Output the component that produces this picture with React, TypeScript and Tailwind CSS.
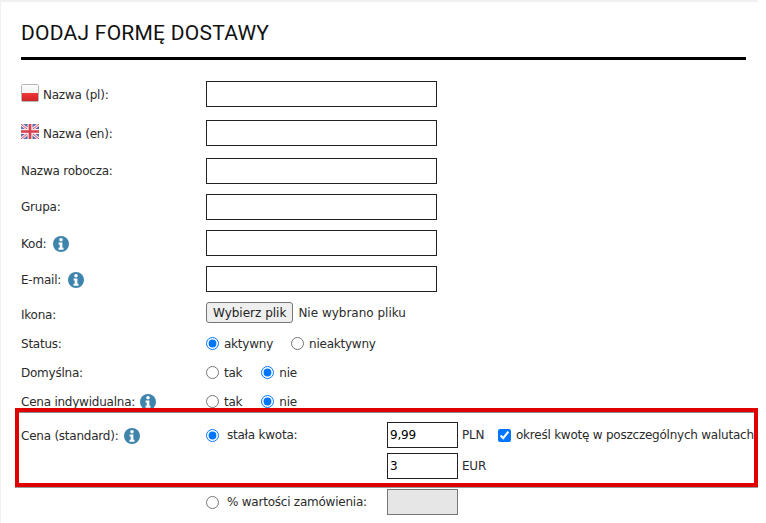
import React from 'react';

function InfoIcon({ className = '' }: { className?: string }) {
  return (
    <svg width="16" height="16" viewBox="0 0 16 16" className={`shrink-0 ${className}`}>
      <circle cx="8" cy="8" r="8" fill="#3e84ad" />
      <circle cx="8" cy="3.8" r="1.8" fill="#ffffff" />
      <path d="M5.6 6.6h3.8v5.2h1.1v1.9H5.5v-1.9h1.2V8.5H5.6z" fill="#ffffff" />
    </svg>
  );
}

function FlagPl() {
  return (
    <svg width="18" height="18" viewBox="0 0 18 18" className="mb-[5px] shrink-0">
      <defs>
        <linearGradient id="plTop" x1="0" y1="0" x2="0" y2="1">
          <stop offset="0" stopColor="#fdfdfd" />
          <stop offset="1" stopColor="#e6e6e6" />
        </linearGradient>
        <linearGradient id="plBottom" x1="0" y1="0" x2="0" y2="1">
          <stop offset="0" stopColor="#ee3a3a" />
          <stop offset="0.55" stopColor="#e0292b" />
          <stop offset="1" stopColor="#c92b2d" />
        </linearGradient>
      </defs>
      <rect x="0.5" y="0.5" width="17" height="17" rx="1" fill="url(#plTop)" stroke="#b5b5b5" />
      <rect x="1" y="9" width="16" height="8" fill="url(#plBottom)" />
    </svg>
  );
}

function FlagEn() {
  return (
    <svg width="18" height="15" viewBox="0 0 18 15" className="mb-[5px] shrink-0">
      <rect width="18" height="15" fill="#5a6cab" />
      <path d="M0 0L18 15M18 0L0 15" stroke="#f3dfe4" strokeWidth="3" />
      <path d="M0 0L18 15M18 0L0 15" stroke="#d9596a" strokeWidth="1" />
      <path d="M9 0V15M0 7.5H18" stroke="#f5e6ea" strokeWidth="5" />
      <path d="M9 0V15M0 7.5H18" stroke="#d8404f" strokeWidth="2.6" />
    </svg>
  );
}

function RadioOption({ checked, label }: { checked?: boolean; label: string }) {
  return (
    <label className="flex items-center gap-[5px]">
      <input type="radio" readOnly checked={!!checked} className="h-[13px] w-[13px]" />
      <span className="pt-[2px]">{label}</span>
    </label>
  );
}

function TextBox({ value = '', className = 'w-[231px]' }: { value?: string; className?: string }) {
  return (
    <input
      readOnly
      value={value}
      className={`h-[26px] border border-[#222222] bg-white px-[2px] text-black outline-none ${className}`}
    />
  );
}

function Row({ label, h, tall, children }: { label?: React.ReactNode; h: string; tall?: boolean; children: React.ReactNode }) {
  return (
    <div className={`flex items-start ${h}`}>
      <div className={`flex w-[185px] shrink-0 items-center gap-[6px] ${tall ? 'h-[28px]' : 'h-[26px]'}`}>{label}</div>
      {children}
    </div>
  );
}

export default function App() {
  return (
    <div className="relative h-[523px] w-[766px] overflow-hidden bg-white">
      <div className="absolute left-0 top-0 h-[2px] w-[758px] bg-[#f0f0f0]" />
      <div className="absolute left-0 top-0 h-full w-[1px] bg-[#f0f0f0]" />

      <div className="pl-[21px] pr-[8px] pt-[21px] font-['DejaVu_Sans',sans-serif] text-[12px] tracking-[-0.23px] text-[#2b2b2b]">
        <h1 className="h-[32px] font-['Roboto',sans-serif] text-[21px] font-normal leading-[25px] tracking-[0.25px] text-[#111111]">
          DODAJ FORMĘ DOSTAWY
        </h1>
        <div className="mt-[4px] mb-[21px] h-[3px] w-[725px] bg-black" />

        <Row h="h-[39px]" tall label={<span className="flex items-center gap-[4px]"><FlagPl />Nazwa (pl):</span>}>
          <TextBox />
        </Row>
        <Row h="h-[38px]" tall label={<span className="flex items-center gap-[4px]"><FlagEn />Nazwa (en):</span>}>
          <TextBox />
        </Row>
        <Row h="h-[36px]" label="Nazwa robocza:"><TextBox /></Row>
        <Row h="h-[36px]" label="Grupa:"><TextBox /></Row>
        <Row h="h-[36px]" tall label={<>Kod: <InfoIcon className="ml-px" /></>}><TextBox /></Row>
        <Row h="h-[36px]" tall label={<>E-mail: <InfoIcon className="ml-px" /></>}><TextBox /></Row>
        <Row h="h-[29px]" label="Ikona:">
          <div className="flex items-center tracking-normal">
            <button className="h-[21px] rounded-[3px] border border-[#767676] bg-[#efefef] px-[6px] text-[#222222]">Wybierz plik</button>
            <span className="ml-[5px]">Nie wybrano pliku</span>
          </div>
        </Row>
        <Row h="h-[29px]" label="Status:">
          <div className="flex h-[24px] gap-[18px]"><RadioOption checked label="aktywny" /><RadioOption label="nieaktywny" /></div>
        </Row>
        <Row h="h-[29px]" label="Domyślna:">
          <div className="flex h-[24px] gap-[19px]"><RadioOption label="tak" /><RadioOption checked label="nie" /></div>
        </Row>
        <Row h="h-[33px]" label={<>Cena indywidualna: <InfoIcon className="-ml-px" /></>}>
          <div className="flex h-[24px] gap-[19px]"><RadioOption label="tak" /><RadioOption checked label="nie" /></div>
        </Row>

        <div className="flex">
          <div className="flex h-[28px] w-[185px] shrink-0 items-center gap-[5px]">Cena (standard): <InfoIcon /></div>
          <div className="flex h-[26px] w-[181px] shrink-0 items-center gap-[8px]">
            <input type="radio" readOnly checked className="h-[13px] w-[13px]" />
            stała kwota:
          </div>
          <div className="flex flex-col gap-[5px]">
            <div className="flex items-center">
              <TextBox value="9,99" className="w-[71px]" />
              <span className="ml-[4px] w-[36px]">PLN</span>
              <label className="flex items-center gap-[5px] whitespace-nowrap">
                <input type="checkbox" readOnly checked className="h-[13px] w-[13px]" />
                określ kwotę w poszczególnych walutach
              </label>
            </div>
            <div className="flex items-center">
              <TextBox value="3" className="w-[71px]" />
              <span className="ml-[4px]">EUR</span>
            </div>
          </div>
        </div>

        <div className="mt-[10px] flex">
          <div className="w-[185px] shrink-0" />
          <div className="flex h-[26px] w-[181px] shrink-0 items-center gap-[8px]">
            <input type="radio" readOnly checked={false} className="h-[13px] w-[13px]" />
            % wartości zamówienia:
          </div>
          <div className="h-[26px] w-[71px] border border-[#767676] bg-[#e6e6e6]" />
        </div>
      </div>

      {/* czerwona ramka z adnotacji na zrzucie */}
      <div className="absolute left-[15px] top-[408px] h-[79px] w-[743px] border-[4px] border-[#e00000] shadow-[0_1px_0_#9a9a9a,inset_0_1px_0_#8a8a8a]" />
    </div>
  );
}
